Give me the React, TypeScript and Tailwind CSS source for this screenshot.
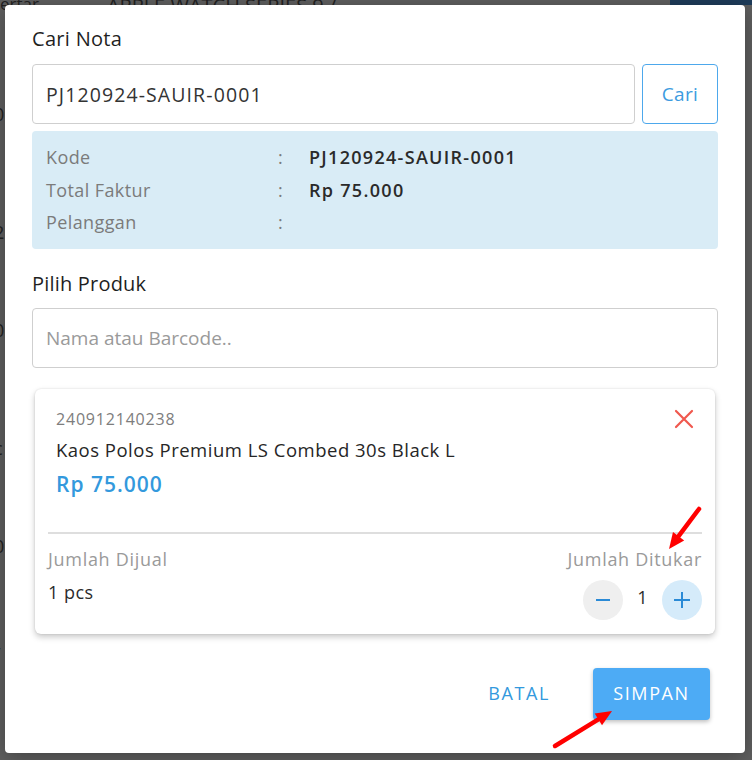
import { useState } from "react";

function XIcon() {
  return (
    <svg width="20" height="20" viewBox="0 0 20 20" fill="none">
      <path d="M2 2L18 18M18 2L2 18" stroke="#f0584e" strokeWidth="2.2" strokeLinecap="round" />
    </svg>
  );
}

function Arrow({ x1, y1, x2, y2 }: { x1: number; y1: number; x2: number; y2: number }) {
  const angle = Math.atan2(y2 - y1, x2 - x1);
  const len = 16;
  const w = 7;
  const bx = x2 - Math.cos(angle) * len;
  const by = y2 - Math.sin(angle) * len;
  const px = -Math.sin(angle) * w;
  const py = Math.cos(angle) * w;
  return (
    <g>
      <line x1={x1} y1={y1} x2={bx} y2={by} stroke="#f00" strokeWidth="4.5" strokeLinecap="round" />
      <polygon points={`${x2},${y2} ${bx + px},${by + py} ${bx - px},${by - py}`} fill="#f00" />
    </g>
  );
}

export default function App() {
  const [nota, setNota] = useState("PJ120924-SAUIR-0001");
  const [qty, setQty] = useState(1);

  return (
    <div
      className="relative h-[760px] w-[752px] overflow-hidden bg-[#5f5f5f]"
      style={{ fontFamily: '"Open Sans", "Noto Sans", sans-serif' }}
    >
      {/* dimmed page behind the dialog */}
      <div className="absolute left-0 top-0 flex h-[5px] w-full text-[#222]">
        <span className="-mt-[9px] ml-0 text-[17px]">ertar</span>
        <span className="-mt-[9px] ml-[68px] text-[20px]">APPLE WATCH SERIES 9 /</span>
        <div className="ml-auto h-[5px] w-[82px] bg-[#1e3c5a]" />
      </div>
      <div className="absolute left-0 top-[5px] flex h-[748px] w-[5px] flex-col text-[18px] leading-none text-[#222]">
        <span className="mt-[100px] -ml-[6px]">0</span>
        <span className="mt-[100px] -ml-[6px]">2</span>
        <span className="mt-[80px] -ml-[6px]">0</span>
        <span className="mt-[100px] -ml-[6px]">c</span>
        <span className="mt-[80px] -ml-[6px]">0</span>
        <span className="mt-[90px] -ml-[6px]">/</span>
      </div>

      {/* dialog */}
      <div className="absolute left-[5px] top-[5px] flex h-[748px] w-[740px] flex-col rounded-[4px] bg-white px-[27px] pt-[20px] shadow-[0_4px_20px_rgba(0,0,0,0.3)]">
        <h2 className="text-[20px] font-medium leading-[28px] tracking-[0.3px] text-[#1f1f1f]">Cari Nota</h2>

        <div className="mt-[11px] flex gap-[7px]">
          <input
            value={nota}
            onChange={(e) => setNota(e.target.value)}
            className="h-[60px] w-[603px] rounded-[4px] border border-[#cfcfcf] px-[13px] text-[19.5px] tracking-[1.1px] text-[#333] outline-none"
          />
          <button className="h-[60px] w-[76px] rounded-[4px] border border-[#4da8ec] text-[19px] tracking-[0.3px] text-[#3d9be0]">
            Cari
          </button>
        </div>

        <div className="mt-[7px] grid grid-cols-[232px_31px_1fr] rounded-[4px] bg-[#d9ecf6] px-[14px] py-[10px] text-[18px] leading-[32.5px] tracking-[0.4px]">
          <span className="text-[#7b7b7b]">Kode</span>
          <span className="text-[#7b7b7b]">:</span>
          <span className="font-semibold tracking-[1.3px] text-[#2a2a2a]">PJ120924-SAUIR-0001</span>
          <span className="text-[#7b7b7b]">Total Faktur</span>
          <span className="text-[#7b7b7b]">:</span>
          <span className="font-semibold tracking-[1.3px] text-[#2a2a2a]">Rp 75.000</span>
          <span className="text-[#7b7b7b]">Pelanggan</span>
          <span className="text-[#7b7b7b]">:</span>
          <span />
        </div>

        <h2 className="mt-[21px] text-[20px] font-medium leading-[28px] tracking-[0.2px] text-[#1f1f1f]">Pilih Produk</h2>

        <input
          placeholder="Nama atau Barcode.."
          className="mt-[10px] h-[60px] w-full rounded-[4px] border border-[#cfcfcf] px-[13px] text-[19px] text-[#333] outline-none placeholder:text-[#9a9a9a]"
        />

        <div className="mx-[3px] mt-[21px] h-[245px] rounded-[6px] bg-white shadow-[0_3px_6px_rgba(0,0,0,0.22),0_0_2px_rgba(0,0,0,0.12)]">
          <div className="relative px-[21px] pt-[20px]">
            <p className="text-[16px] leading-[20px] tracking-[0.8px] text-[#7d7d7d]">240912140238</p>
            <p className="mt-[8px] text-[18.5px] font-medium leading-[26px] tracking-[0.5px] text-[#262626]">
              Kaos Polos Premium LS Combed 30s Black L
            </p>
            <p className="mt-[7px] text-[21px] font-semibold leading-[28px] tracking-[1px] text-[#3399dd]">Rp 75.000</p>
            <button className="absolute right-[21px] top-[20px]">
              <XIcon />
            </button>
          </div>
          <div className="mx-[13px] mt-[34px] h-[2px] bg-[#dedede]" />
          <div className="flex justify-between px-[13px] pt-[12px]">
            <div>
              <p className="text-[18px] leading-[26px] tracking-[0.7px] text-[#9a9a9a]">Jumlah Dijual</p>
              <p className="mt-[7px] text-[18px] leading-[26px] tracking-[0.5px] text-[#2b2b2b]">1 pcs</p>
            </div>
            <div className="flex flex-col items-end">
              <p className="text-[18px] leading-[26px] tracking-[0.7px] text-[#9a9a9a]">Jumlah Ditukar</p>
              <div className="mt-[8px] flex items-center">
                <button
                  onClick={() => setQty((q) => Math.max(0, q - 1))}
                  className="flex h-[40px] w-[40px] items-center justify-center rounded-full bg-[#efefef]"
                >
                  <svg width="16" height="16" viewBox="0 0 16 16">
                    <path d="M1 8H15" stroke="#2a8ad6" strokeWidth="2" />
                  </svg>
                </button>
                <span className="w-[39px] pb-[4px] text-center text-[18px] text-[#2b2b2b]">{qty}</span>
                <button
                  onClick={() => setQty((q) => q + 1)}
                  className="flex h-[40px] w-[40px] items-center justify-center rounded-full bg-[#d5ebfa]"
                >
                  <svg width="18" height="18" viewBox="0 0 18 18">
                    <path d="M1 9H17M9 1V17" stroke="#2a8ad6" strokeWidth="2" />
                  </svg>
                </button>
              </div>
            </div>
          </div>
        </div>

        <div className="mt-[34px] flex items-center justify-end gap-[23px] pr-[8px]">
          <button className="h-[52px] px-[20px] text-[18px] tracking-[1.6px] text-[#3399dd]">BATAL</button>
          <button className="h-[52px] w-[117px] rounded-[4px] bg-[#4dabf5] text-[18px] tracking-[1.6px] text-white shadow-[0_2px_4px_rgba(0,0,0,0.25)]">
            SIMPAN
          </button>
        </div>
      </div>

      {/* annotation arrows */}
      <svg className="pointer-events-none absolute left-0 top-0" width="752" height="760">
        <Arrow x1={699} y1={509} x2={669} y2={549} />
        <Arrow x1={555} y1={746} x2={612} y2={711} />
      </svg>
    </div>
  );
}
